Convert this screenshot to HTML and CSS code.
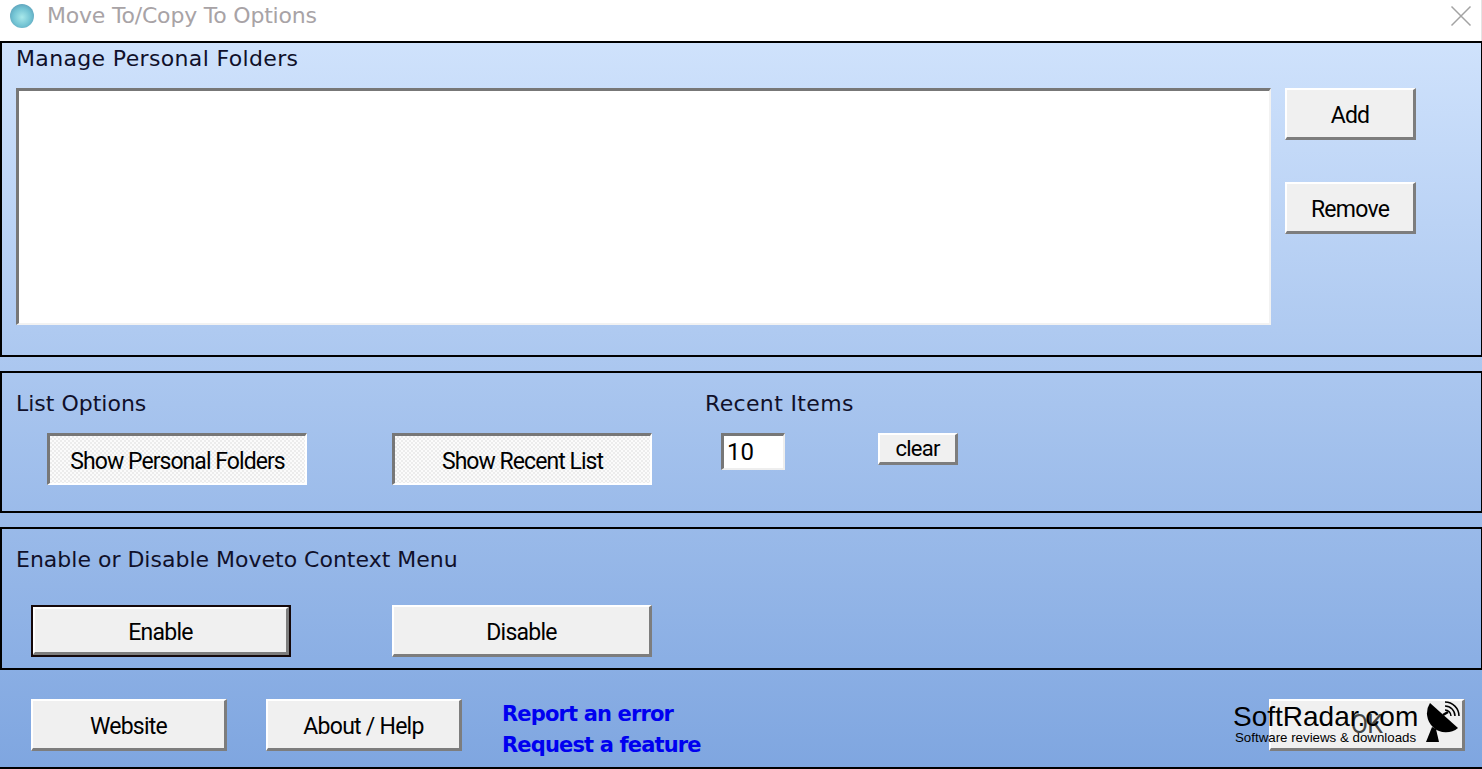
FILE: index.html
```html
<!DOCTYPE html>
<html lang="en">
<head>
<meta charset="utf-8">
<title>Move To/Copy To Options</title>
<link rel="stylesheet" href="styles.css">
</head>
<body>
<div class="window">
  <header class="titlebar">
    <span class="orb"></span>
    <span class="title">Move To/Copy To Options</span>
    <svg class="close" width="22" height="22" viewBox="0 0 22 22"><path d="M1.500 1.500L20.500 20.500M20.500 1.500L1.500 20.500" stroke="#a3a3a3" stroke-width="1.500" fill="none"/></svg>
  </header>
  <main class="client">
    <section class="panel panel-folders">
      <div class="folders-main">
        <h2 class="heading heading-wide">Manage Personal Folders</h2>
        <div class="listbox"></div>
      </div>
      <div class="folders-actions">
        <button class="btn btn-side">Add</button>
        <button class="btn btn-side">Remove</button>
      </div>
    </section>
    <section class="panel panel-list">
      <div class="list-main">
        <h2 class="heading">List Options</h2>
        <div class="list-toggles">
          <button class="btn btn-wide btn-down">Show Personal Folders</button>
          <button class="btn btn-wide btn-down">Show Recent List</button>
        </div>
      </div>
      <div class="recent">
        <h2 class="heading heading-wide">Recent Items</h2>
        <div class="spin">10</div>
      </div>
      <button class="btn btn-clear">clear</button>
    </section>
    <section class="panel panel-menu">
      <h2 class="heading">Enable or Disable Moveto Context Menu</h2>
      <div class="menu-row">
        <button class="btn btn-wide btn-default">Enable</button>
        <button class="btn btn-wide">Disable</button>
      </div>
    </section>
    <footer class="footer">
      <button class="btn btn-foot">Website</button>
      <button class="btn btn-foot">About / Help</button>
      <div class="links">
        <a class="link">Report an error</a>
        <a class="link">Request a feature</a>
      </div>
      <button class="btn btn-foot btn-ok">OK</button>
      <div class="watermark">
        <div class="wm-text">
          <div class="wm-name">SoftRadar.com</div>
          <div class="wm-tag">Software reviews &amp; downloads</div>
        </div>
        <svg class="wm-dish" width="36" height="44" viewBox="0 0 36 44">
          <path d="M6 3A19 19 0 0 0 34 28Z" fill="#000"/>
          <path d="M8 27L2 42H15L12 29Z" fill="#000"/>
          <path d="M19 15L24 12" stroke="#000" stroke-width="2.500"/>
          <path d="M21 10A6 6 0 0 1 27 16M21 6A10 10 0 0 1 31 16M21 2A14 14 0 0 1 35 16" stroke="#000" stroke-width="1.500" fill="none"/>
        </svg>
      </div>
    </footer>
  </main>
</div>
</body>
</html>
```
FILE: styles.css
```css
* { box-sizing: border-box; }
html, body { margin: 0; padding: 0; height: 100%; background: #fff; overflow: hidden; }
body { font-family: "Liberation Sans", Arial, sans-serif; color: #000; }

.window { width: 1482px; height: 769px; display: flex; flex-direction: column; }

.titlebar { height: 41px; flex: none; display: flex; align-items: center; padding: 0 9px 10px 10px; background: #fff; border-right: 1px solid #e4e4e4; }
.orb { width: 24px; height: 24px; border-radius: 50%; background: radial-gradient(circle at 50% 55%, #a8e8ea 0%, #72c3d3 50%, #4f87a8 100%); }
.title { margin-left: 13px; font-family: "DejaVu Sans", sans-serif; font-size: 22px; letter-spacing: -0.200px; color: #a8a3a6; flex: 1; }
.close { display: block; }

.client { flex: 1; width: 1482px; display: flex; flex-direction: column; background: linear-gradient(180deg, #cfe2fc 0%, #7fa6e0 100%); border-bottom: 2px solid #000; }

.panel { border: 2px solid #000; border-right-width: 1px; flex: none; }
.heading { margin: 0; padding-top: 1px; font-family: "DejaVu Sans", sans-serif; font-weight: 400; font-size: 22px; line-height: 30px; letter-spacing: 0; color: #10102a; white-space: nowrap; }
.heading-wide { letter-spacing: 0.350px; }

.btn { display: block; padding: 4px 0 0; font-family: Roboto, "Liberation Sans", sans-serif; font-size: 23px; letter-spacing: -0.750px; color: #000; background: #f0f0f0; border-style: solid; border-width: 2px 3px 3px 2px; border-color: #fff #7d7d7d #7d7d7d #fff; border-radius: 0; }
.btn-down { letter-spacing: -0.950px; background-color: #fbfbfb; background-image: conic-gradient(#ececec 25%, transparent 0 50%, #ececec 0 75%, transparent 0); background-size: 4px 4px; border-width: 3px 2px 2px 3px; border-color: #777 #fff #fff #777; }
.btn-default { outline: 2px solid #14080a; outline-offset: -2px; border-width: 4px 5px 5px 4px; }

.panel-folders { height: 316px; display: flex; padding-left: 14px; }
.folders-main { width: 1255px; }
.panel-folders .heading { height: 45px; }
.listbox { width: 1255px; height: 237px; background: #fff; border-style: solid; border-width: 3px 2px 2px 3px; border-color: #777 #f2f2f2 #f2f2f2 #777; }
.folders-actions { padding: 45px 0 0 14px; display: flex; flex-direction: column; gap: 42px; }
.btn-side { width: 131px; height: 52px; }

.panel-list { height: 142px; margin-top: 14px; display: flex; padding-left: 14px; }
.list-main { width: 689px; padding-top: 15px; }
.list-toggles { display: flex; gap: 85px; margin: 14px 0 0 31px; }
.btn-wide { width: 260px; height: 52px; }
.recent { width: 173px; padding-top: 15px; }
.spin { width: 64px; height: 37px; margin: 14px 0 0 16px; padding-left: 3px; background: #fff; font-family: Roboto, "Liberation Sans", sans-serif; font-size: 24px; line-height: 32px; border-style: solid; border-width: 3px 2px 2px 3px; border-color: #777 #eee #eee #777; }
.btn-clear { width: 80px; height: 32px; margin-top: 60px; font-size: 22px; padding-top: 0; }

.panel-menu { height: 143px; margin-top: 14px; padding: 15px 0 0 14px; }
.menu-row { display: flex; gap: 101px; margin: 30px 0 0 15px; }

.footer { position: relative; display: flex; align-items: flex-start; padding: 29px 0 0 31px; flex: 1; }
.btn-foot { width: 196px; height: 52px; margin-right: 39px; }
.btn-ok { position: absolute; left: 1269px; top: 29px; margin: 0; padding-top: 0; color: #444; font-size: 25px; }
.links { display: flex; flex-direction: column; gap: 4px; margin-top: 2px; margin-left: 1px; }
.link { font-family: "DejaVu Sans", sans-serif; font-weight: 700; font-size: 21px; line-height: 27px; color: #0000f0; white-space: nowrap; letter-spacing: -0.850px; }

.watermark { position: absolute; left: 1233px; top: 32px; display: flex; align-items: flex-start; gap: 6px; }
.wm-name { font-size: 28px; line-height: 30px; color: #000; }
.wm-tag { font-size: 13.300px; line-height: 14px; margin: -1px 0 0 2px; color: #000; }
.wm-dish { display: block; margin-top: -2px; }
```
